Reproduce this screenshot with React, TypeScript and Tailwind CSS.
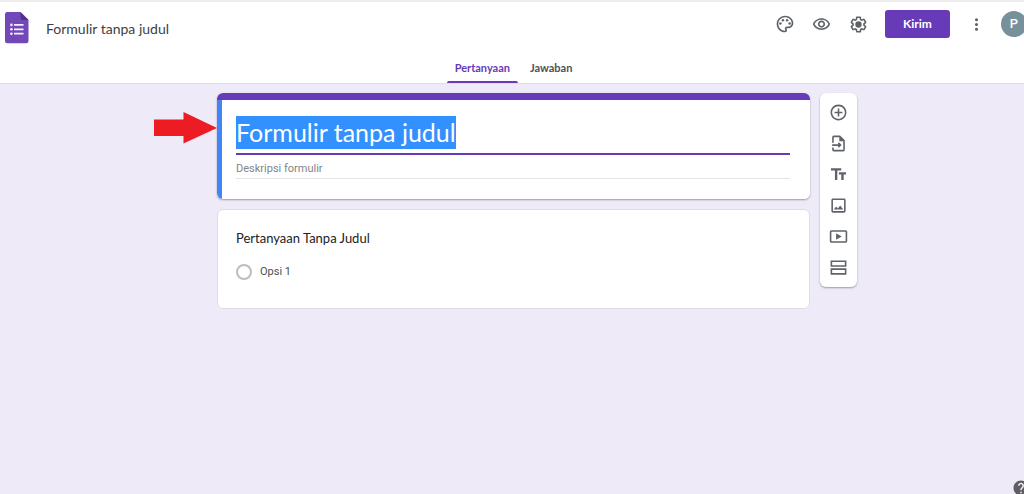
import { ReactNode, useState } from "react";
import {
  MdAddCircleOutline,
  MdHelp,
  MdMoreVert,
  MdOutlineImage,
  MdOutlinePalette,
  MdOutlineVisibility,
} from "react-icons/md";

function FormsLogo() {
  return (
    <svg width="24" height="32" viewBox="0 0 24 32" aria-hidden="true">
      <path
        d="M2.2 0H15.5L23.5 8V29a2.2 2.2 0 0 1-2.2 2.2H2.2A2.2 2.2 0 0 1 0 29V2.2A2.2 2.2 0 0 1 2.2 0Z"
        fill="#7248b9"
      />
      <path d="M15.5 0L23.5 8H17.7a2.2 2.2 0 0 1-2.2-2.2Z" fill="#523289" />
      <path
        d="M9 12h9.5v1.8H9zM9 16.4h9.5v1.8H9zM9 20.8h9.5v1.8H9z"
        fill="#f4effa"
      />
      <g fill="#f4effa">
        <circle cx="6.4" cy="12.9" r="1.3" />
        <circle cx="6.4" cy="17.3" r="1.3" />
        <circle cx="6.4" cy="21.7" r="1.3" />
      </g>
    </svg>
  );
}

function SettingsIcon() {
  return (
    <svg width="19" height="19" viewBox="0 0 24 24" fill="currentColor">
      <path d="M13.85 22.25h-3.7c-.74 0-1.36-.54-1.45-1.27l-.27-1.89c-.27-.14-.53-.29-.79-.46l-1.8.72c-.7.26-1.47-.03-1.81-.65L2.2 15.53c-.35-.66-.2-1.44.36-1.88l1.53-1.19c-.01-.15-.02-.3-.02-.46 0-.15.01-.31.02-.46l-1.52-1.19c-.59-.45-.74-1.26-.37-1.88l1.85-3.19c.34-.62 1.11-.9 1.79-.63l1.81.73c.26-.17.52-.32.78-.46l.27-1.91c.09-.7.71-1.25 1.44-1.25h3.7c.74 0 1.36.54 1.45 1.27l.27 1.89c.27.14.53.29.79.46l1.8-.72c.71-.26 1.48.03 1.82.65l1.84 3.18c.36.66.2 1.44-.36 1.88l-1.52 1.19c.01.15.02.3.02.46s-.01.31-.02.46l1.52 1.19c.56.45.72 1.23.37 1.86l-1.86 3.22c-.34.62-1.11.9-1.8.63l-1.8-.72c-.26.17-.52.32-.78.46l-.27 1.91c-.1.68-.72 1.22-1.46 1.22zm-3.23-2h2.76l.37-2.55.53-.22c.44-.18.88-.44 1.34-.78l.45-.34 2.38.96 1.38-2.4-2.03-1.58.07-.56c.03-.26.06-.51.06-.78s-.03-.53-.06-.78l-.07-.56 2.03-1.58-1.39-2.4-2.39.96-.45-.35c-.42-.32-.87-.58-1.33-.77l-.52-.22-.37-2.55h-2.76l-.37 2.55-.53.21c-.44.19-.88.44-1.34.79l-.45.33-2.38-.95-1.39 2.39 2.03 1.58-.07.56a7 7 0 0 0-.06.79c0 .26.02.53.06.78l.07.56-2.03 1.58 1.38 2.4 2.39-.96.45.35c.43.33.86.58 1.33.77l.53.22.38 2.55z" />
      <circle cx="12" cy="12" r="4" />
    </svg>
  );
}

function ImportIcon() {
  return (
    <svg width="19" height="19" viewBox="0 0 24 24" fill="currentColor">
      <path d="M14 2H6a2 2 0 0 0-2 2v7h2V4h7v5h5v11H6v-3H4v3a2 2 0 0 0 2 2h12a2 2 0 0 0 2-2V8l-6-6z" />
      <path d="M12.5 10.5L11.1 11.9 12.2 13H4v2h8.2l-1.1 1.1 1.4 1.4L16 14z" />
    </svg>
  );
}

function TitleIcon() {
  return (
    <svg width="19" height="19" viewBox="0 0 24 24" fill="currentColor">
      <path d="M2.5 4v3h5v12h3V7h5V4h-13zM21.5 9h-9v3h3v7h3v-7h3V9z" />
    </svg>
  );
}

function VideoIcon() {
  return (
    <svg width="19" height="19" viewBox="0 0 24 24" fill="currentColor">
      <path d="M21 4H3c-1.1 0-2 .9-2 2v12c0 1.1.9 2 2 2h18c1.1 0 2-.9 2-2V6c0-1.1-.9-2-2-2zm0 14H3V6h18v12z" />
      <path d="M9 8v8l7-4z" />
    </svg>
  );
}

function SectionIcon() {
  return (
    <svg width="19" height="19" viewBox="0 0 24 24" fill="currentColor">
      <path d="M2 3v8h20V3H2zm18 6H4V5h16v4zM2 13v8h20v-8H2zm18 6H4v-4h16v4z" />
    </svg>
  );
}

const headerActions = [
  { title: "Sesuaikan tema", icon: <MdOutlinePalette size={20} /> },
  { title: "Pratinjau", icon: <MdOutlineVisibility size={19} /> },
  { title: "Setelan", icon: <SettingsIcon /> },
];

const tools = [
  { title: "Tambahkan pertanyaan", icon: <MdAddCircleOutline size={19} /> },
  { title: "Impor pertanyaan", icon: <ImportIcon /> },
  { title: "Tambahkan judul dan deskripsi", icon: <TitleIcon /> },
  { title: "Tambahkan gambar", icon: <MdOutlineImage size={19} /> },
  { title: "Tambahkan video", icon: <VideoIcon /> },
  { title: "Tambahkan bagian", icon: <SectionIcon /> },
];

const tabs = ["Pertanyaan", "Jawaban"];

function IconButton({ title, children }: { title: string; children: ReactNode }) {
  return (
    <button
      type="button"
      aria-label={title}
      className="flex h-[31px] w-[37px] items-center justify-center text-[#5f6368]"
    >
      {children}
    </button>
  );
}

function Header() {
  const [active, setActive] = useState("Pertanyaan");

  return (
    <header className="border-t-2 border-b border-t-[#ededed] border-b-[#dfdce8] bg-white">
      <div className="flex h-[52px] items-center justify-between pl-[5px]">
        <div className="flex items-center gap-[17px]">
          <FormsLogo />
          <input
            aria-label="Nama dokumen"
            defaultValue="Formulir tanpa judul"
            className="w-48 text-[14px] text-[#3c4043] outline-none"
          />
        </div>
        <div className="flex items-center pb-2">
          {headerActions.map((action) => (
            <IconButton key={action.title} title={action.title}>
              {action.icon}
            </IconButton>
          ))}
          <button
            type="button"
            className="mx-2 h-7 w-[65px] rounded-[3px] bg-[#673ab7] text-[12px] font-bold text-white"
          >
            Kirim
          </button>
          <IconButton title="Lainnya">
            <MdMoreVert size={19} />
          </IconButton>
          <button
            type="button"
            aria-label="Akun"
            className="ml-1.5 size-[26px] rounded-full bg-[#78909c] font-[Roboto,sans-serif] text-[13px] font-medium text-white"
          >
            P
          </button>
        </div>
      </div>
      <div className="flex justify-center gap-1">
        {tabs.map((tab) => (
          <button
            key={tab}
            type="button"
            onClick={() => setActive(tab)}
            className={`flex h-[29px] flex-col items-center justify-between px-2 pt-1.5 text-[11px] leading-4 font-bold ${
              active === tab ? "text-[#673ab7]" : "text-[#4d5156]"
            }`}
          >
            {tab}
            {active === tab && (
              <span className="-mx-2 h-0.5 self-stretch rounded-t-sm bg-[#673ab7]" />
            )}
          </button>
        ))}
      </div>
    </header>
  );
}

function Arrow() {
  return (
    <svg
      width="63"
      height="32"
      viewBox="0 0 63 32"
      className="absolute top-[19px] right-full"
      aria-hidden="true"
    >
      <path d="M0 7.5H29.5V0L63 16 29.5 31.5V24H0Z" fill="#ed1c24" />
    </svg>
  );
}

function TitleCard() {
  return (
    <section className="relative rounded-md shadow-[0_1px_2px_rgba(0,0,0,0.35)]">
      <Arrow />
      <div className="overflow-hidden rounded-md bg-white">
        <div className="h-[7px] bg-[#673ab7]" />
        <div className="border-l-5 border-[#4285f4] pt-4 pr-5 pb-5 pl-3.5">
          <div className="border-b-2 border-[#673ab7] pb-1">
            <input
              aria-label="Judul formulir"
              defaultValue="Formulir tanpa judul"
              className="block h-[33px] field-sizing-content max-w-full bg-[#3390ff] text-[25px] text-white outline-none"
            />
          </div>
          <input
            aria-label="Deskripsi formulir"
            placeholder="Deskripsi formulir"
            className="mt-1 block h-5 w-full border-b border-[#e4e4e6] font-[Roboto,sans-serif] text-[11px] outline-none placeholder:text-[#80868b]"
          />
        </div>
      </div>
    </section>
  );
}

function QuestionCard() {
  return (
    <section className="rounded-md border border-[#e0dde8] bg-white px-[18px] pt-5 pb-7">
      <h2 className="text-[13px] leading-4 text-[#202124]">Pertanyaan Tanpa Judul</h2>
      <label className="mt-[18px] flex items-center gap-2 font-[Roboto,sans-serif] text-[11px] leading-4 text-[#4d5156]">
        <input
          type="radio"
          name="opsi"
          className="size-4 appearance-none rounded-full border-2 border-[#bdbdbd]"
        />
        Opsi 1
      </label>
    </section>
  );
}

export default function App() {
  return (
    <div className="min-h-screen overflow-hidden bg-[#eeeaf8] font-[Lato,sans-serif]">
      <div className="-mr-[3px]">
        <Header />
        <main className="grid grid-cols-[1fr_minmax(0,593px)_1fr] items-start gap-x-2.5 pt-[9px]">
          <div className="col-start-2 flex flex-col gap-2.5">
            <TitleCard />
            <QuestionCard />
          </div>
          <aside className="w-[37px] rounded-md bg-white py-1 shadow-[0_1px_2px_rgba(0,0,0,0.35)]">
            {tools.map((tool) => (
              <IconButton key={tool.title} title={tool.title}>
                {tool.icon}
              </IconButton>
            ))}
          </aside>
        </main>
      </div>
      <a
        href="#bantuan"
        aria-label="Bantuan"
        className="fixed -right-[6px] -bottom-[3px] text-[#5f5f63]"
      >
        <MdHelp size={18} />
      </a>
    </div>
  );
}
